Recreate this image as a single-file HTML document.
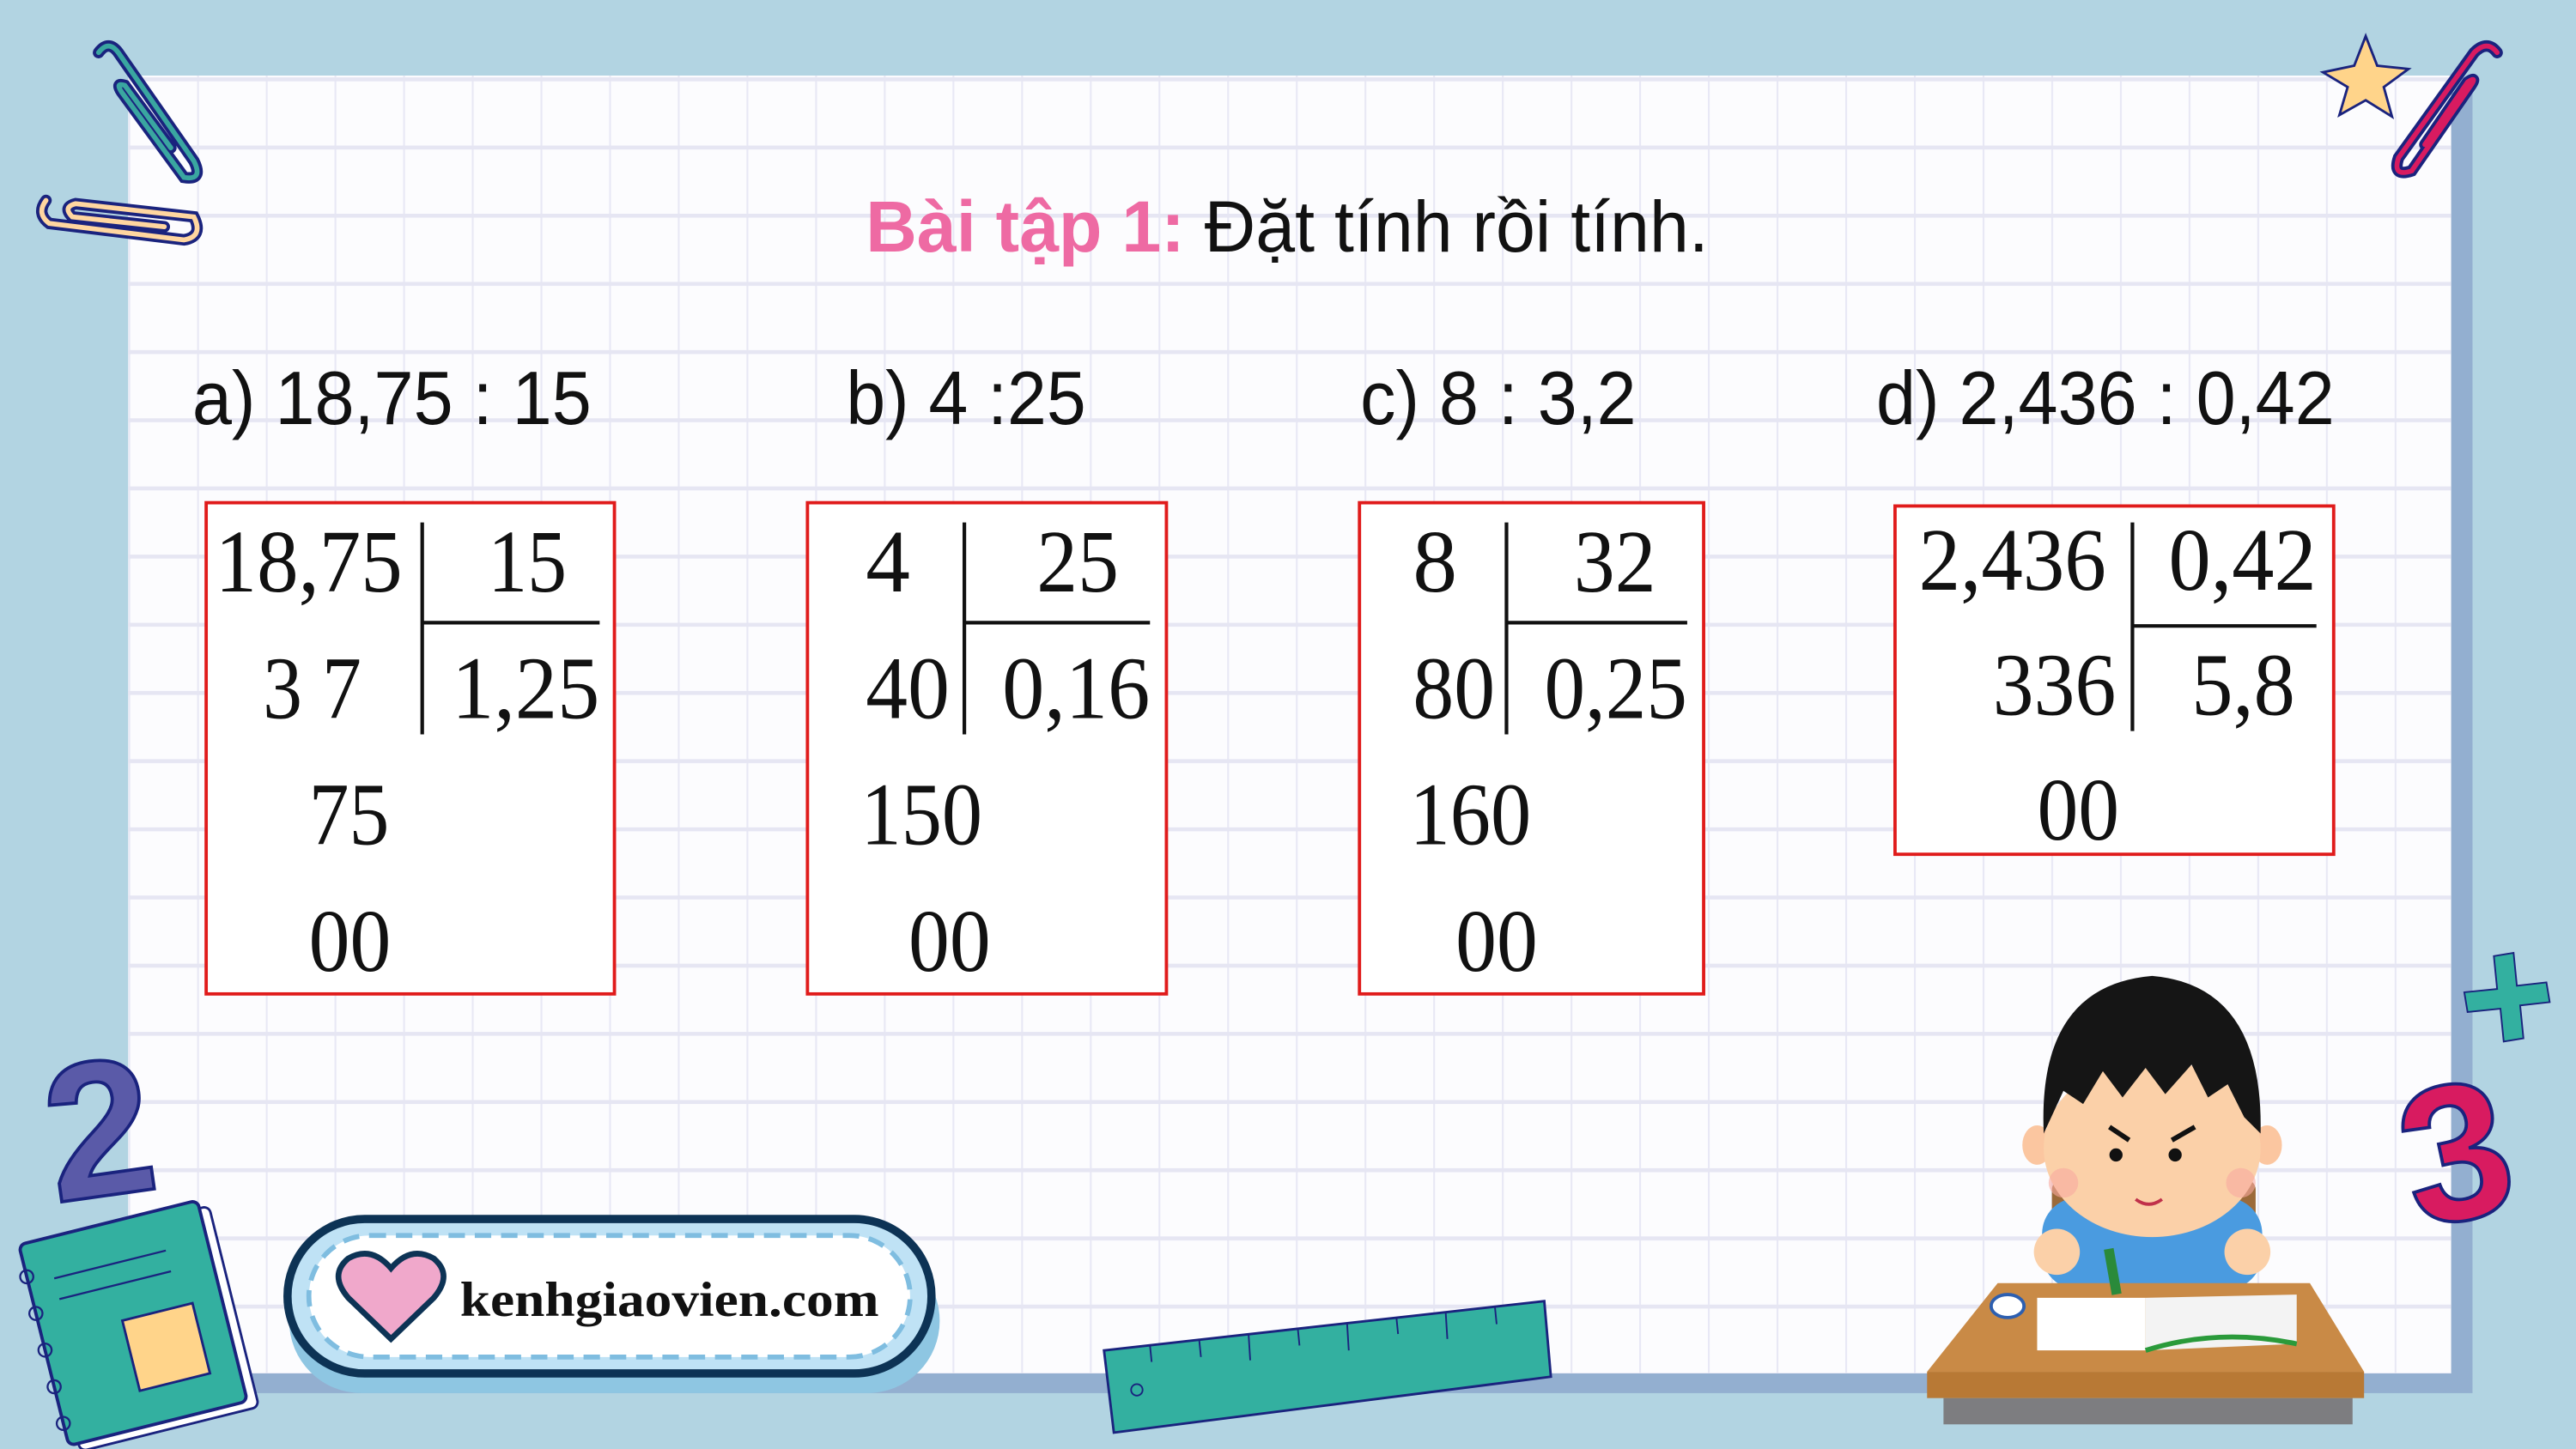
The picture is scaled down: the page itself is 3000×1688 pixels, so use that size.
<!DOCTYPE html>
<html><head><meta charset="utf-8"><style>html,body{margin:0;padding:0;width:3000px;height:1688px;overflow:hidden;background:#b2d4e2}svg{display:block}</style></head><body>
<svg width="3000" height="1688" viewBox="0 0 1568 882" preserveAspectRatio="none" xmlns="http://www.w3.org/2000/svg">
<defs>
<pattern id="g" x="120" y="88.6" width="41.8" height="41.5" patternUnits="userSpaceOnUse">
<rect x="0" y="0" width="1.1" height="41.5" fill="#e8e8f5"/>
<rect x="0" y="0" width="41.8" height="2.4" fill="#e6e6f3"/>
</pattern>
</defs>
<rect width="1568" height="882" fill="#b2d4e2"/>
<rect x="88" y="56" width="1417" height="792" fill="#93afd0"/>
<rect x="78" y="46" width="1414" height="790" fill="#fcfcfe"/>
<rect x="78" y="46" width="1414" height="790" fill="url(#g)"/>

<text x="527" y="153" font-family="Liberation Sans, sans-serif" font-size="44" textLength="513" lengthAdjust="spacingAndGlyphs"><tspan fill="#ee6aa3" font-weight="bold">Bài tập 1:</tspan><tspan fill="#111"> Đặt tính rồi tính.</tspan></text>

<g font-family="Liberation Sans, sans-serif" font-size="46" fill="#111">
<text x="117" y="258" textLength="243" lengthAdjust="spacingAndGlyphs">a) 18,75 : 15</text>
<text x="515" y="258" textLength="146" lengthAdjust="spacingAndGlyphs">b) 4 :25</text>
<text x="828" y="258" textLength="168" lengthAdjust="spacingAndGlyphs">c) 8 : 3,2</text>
<text x="1142" y="258" textLength="279" lengthAdjust="spacingAndGlyphs">d) 2,436 : 0,42</text>
</g>

<g fill="#fff" stroke="#e01b1b" stroke-width="2">
<rect x="125.5" y="306" width="248.5" height="299"/>
<rect x="491.5" y="306" width="218.5" height="299"/>
<rect x="827.5" y="306" width="209.5" height="299"/>
<rect x="1153.5" y="308" width="267" height="212"/>
</g>
<g stroke="#111" stroke-width="2.2">
<line x1="257" y1="318" x2="257" y2="447"/><line x1="257" y1="379" x2="365" y2="379"/>
<line x1="587" y1="318" x2="587" y2="447"/><line x1="587" y1="379" x2="700" y2="379"/>
<line x1="917" y1="318" x2="917" y2="447"/><line x1="917" y1="379" x2="1027" y2="379"/>
<line x1="1298" y1="318" x2="1298" y2="445"/><line x1="1298" y1="381" x2="1410" y2="381"/>
</g>
<g font-family="Liberation Serif, serif" font-size="54" fill="#111">
<text x="131" y="360" textLength="114" lengthAdjust="spacingAndGlyphs">18,75</text>
<text x="297" y="360" textLength="48" lengthAdjust="spacingAndGlyphs">15</text>
<text x="160" y="437" textLength="60" lengthAdjust="spacingAndGlyphs">3 7</text>
<text x="275" y="437" textLength="90" lengthAdjust="spacingAndGlyphs">1,25</text>
<text x="188" y="514" textLength="49" lengthAdjust="spacingAndGlyphs">75</text>
<text x="188" y="591" textLength="50" lengthAdjust="spacingAndGlyphs">00</text>

<text x="527" y="360">4</text>
<text x="631" y="360" textLength="50" lengthAdjust="spacingAndGlyphs">25</text>
<text x="527" y="437" textLength="51" lengthAdjust="spacingAndGlyphs">40</text>
<text x="610" y="437" textLength="90" lengthAdjust="spacingAndGlyphs">0,16</text>
<text x="524" y="514" textLength="74" lengthAdjust="spacingAndGlyphs">150</text>
<text x="553" y="591" textLength="50" lengthAdjust="spacingAndGlyphs">00</text>

<text x="860" y="360">8</text>
<text x="958" y="360" textLength="50" lengthAdjust="spacingAndGlyphs">32</text>
<text x="860" y="437" textLength="50" lengthAdjust="spacingAndGlyphs">80</text>
<text x="940" y="437" textLength="87" lengthAdjust="spacingAndGlyphs">0,25</text>
<text x="858" y="514" textLength="74" lengthAdjust="spacingAndGlyphs">160</text>
<text x="886" y="591" textLength="50" lengthAdjust="spacingAndGlyphs">00</text>

<text x="1168" y="359" textLength="114" lengthAdjust="spacingAndGlyphs">2,436</text>
<text x="1320" y="359" textLength="90" lengthAdjust="spacingAndGlyphs">0,42</text>
<text x="1213" y="435" textLength="75" lengthAdjust="spacingAndGlyphs">336</text>
<text x="1334" y="435" textLength="63" lengthAdjust="spacingAndGlyphs">5,8</text>
<text x="1240" y="511" textLength="50" lengthAdjust="spacingAndGlyphs">00</text>
</g>

<!-- paperclips -->
<g fill="none" stroke-linecap="round">
<path d="M60 32 Q66 24 72 32 L118 98 Q124 110 112 108 L74 56 Q70 50 76 52 L104 90" stroke="#1a237e" stroke-width="7"/>
<path d="M60 32 Q66 24 72 32 L118 98 Q124 110 112 108 L74 56 Q70 50 76 52 L104 90" stroke="#3aa6a0" stroke-width="3"/>
<path d="M28 122 Q22 130 30 136 L112 146 Q124 144 118 132 L46 124 Q38 126 44 132 L100 138" stroke="#1a237e" stroke-width="7"/>
<path d="M28 122 Q22 130 30 136 L112 146 Q124 144 118 132 L46 124 Q38 126 44 132 L100 138" stroke="#ffd6a0" stroke-width="3"/>
<path d="M1520 32 Q1514 24 1506 32 L1460 96 Q1456 108 1468 104 L1504 52 Q1508 46 1502 50 L1476 88" stroke="#1a237e" stroke-width="7"/>
<path d="M1520 32 Q1514 24 1506 32 L1460 96 Q1456 108 1468 104 L1504 52 Q1508 46 1502 50 L1476 88" stroke="#d81b60" stroke-width="3"/>
</g>
<polygon points="1440,22 1447,40 1466,42 1451,53 1456,71 1440,61 1424,70 1429,53 1414,44 1433,40" fill="#ffd48a" stroke="#1a237e" stroke-width="1.5"/>

<!-- numbers -->
<text x="28" y="728" font-family="Liberation Sans, sans-serif" font-weight="bold" font-size="118" fill="#5a5aa8" stroke="#1a237e" stroke-width="2" transform="rotate(-8 60 690)">2</text>
<text x="1462" y="740" font-family="Liberation Sans, sans-serif" font-weight="bold" font-size="118" fill="#d81b60" stroke="#1a237e" stroke-width="2" transform="rotate(-12 1505 700)">3</text>
<path d="M1518 582 L1530 580 L1532 600 L1550 598 L1552 610 L1534 612 L1536 632 L1524 634 L1522 614 L1502 616 L1500 604 L1520 602 Z" fill="#33b0a0" stroke="#1a237e" stroke-width="1"/>

<!-- notebook -->
<g transform="rotate(-14 90 800)">
<rect x="30" y="745" width="112" height="126" rx="4" fill="#fff" stroke="#1a237e" stroke-width="1.5"/>
<rect x="24" y="740" width="112" height="126" rx="4" fill="#33b0a0" stroke="#1a237e" stroke-width="2"/>
<rect x="74" y="800" width="44" height="44" fill="#ffd48a" stroke="#1a237e" stroke-width="1.5"/>
<line x1="40" y1="765" x2="110" y2="765" stroke="#1a237e" stroke-width="1.2"/>
<line x1="40" y1="778" x2="110" y2="778" stroke="#1a237e" stroke-width="1.2"/>
<g fill="none" stroke="#1a237e" stroke-width="1.2"><circle cx="24" cy="760" r="4"/><circle cx="24" cy="783" r="4"/><circle cx="24" cy="806" r="4"/><circle cx="24" cy="829" r="4"/><circle cx="24" cy="852" r="4"/></g>
</g>

<!-- badge -->
<rect x="176" y="760" width="396" height="88" rx="44" fill="#8ec6e2"/>
<rect x="175" y="742" width="392" height="94" rx="47" fill="#bfe2f5" stroke="#0d3355" stroke-width="5"/>
<rect x="188" y="752" width="366" height="74" rx="37" fill="#fff" stroke="#7fbde0" stroke-width="3" stroke-dasharray="10 6"/>
<path d="M238 815 L212 790 Q200 776 212 766 Q226 758 238 772 Q250 758 264 766 Q276 776 264 790 Z" fill="#f0a8cb" stroke="#0d3355" stroke-width="3.5"/>
<text x="280" y="801" font-family="Liberation Serif, serif" font-weight="bold" font-size="30" fill="#111" textLength="255" lengthAdjust="spacingAndGlyphs">kenhgiaovien.com</text>

<!-- ruler -->
<polygon points="672,822 940,792 944,838 678,872" fill="#33b0a0" stroke="#1a237e" stroke-width="1.5"/>
<g stroke="#1a237e" stroke-width="1">
<line x1="700" y1="819" x2="701" y2="829"/><line x1="730" y1="816" x2="731" y2="826"/><line x1="760" y1="812" x2="761" y2="828"/><line x1="790" y1="809" x2="791" y2="819"/><line x1="820" y1="806" x2="821" y2="822"/><line x1="850" y1="802" x2="851" y2="812"/><line x1="880" y1="799" x2="881" y2="815"/><line x1="910" y1="796" x2="911" y2="806"/>
</g>
<circle cx="692" cy="846" r="3.5" fill="none" stroke="#1a237e" stroke-width="1"/>

<!-- boy -->
<rect x="1249" y="718" width="124" height="50" rx="6" fill="#9b6a3a"/>
<rect x="1243" y="729" width="134" height="56" rx="22" fill="#4a9be0"/>
<ellipse cx="1252" cy="762" rx="14" ry="14" fill="#fbd0a8"/>
<ellipse cx="1368" cy="762" rx="14" ry="14" fill="#fbd0a8"/>
<rect x="1183" y="851" width="249" height="16" fill="#7d7d80"/>
<polygon points="1216,781 1406,781 1439,835 1173,835" fill="#c98a46"/>
<rect x="1173" y="835" width="266" height="16" fill="#b87935"/>
<polygon points="1240,790 1306,790 1306,822 1240,822" fill="#fff"/>
<polygon points="1306,790 1398,788 1398,818 1306,822" fill="#f3f3f3"/>
<path d="M1306 822 Q1350 808 1398 818" fill="none" stroke="#2a9a3a" stroke-width="3"/>
<ellipse cx="1222" cy="795" rx="10" ry="7" fill="#fff" stroke="#2d5fb0" stroke-width="2"/>
<rect x="1283" y="760" width="6" height="28" fill="#2a8a3a" transform="rotate(-10 1286 774)"/>
<ellipse cx="1240" cy="697" rx="9" ry="12" fill="#fbc6a0"/>
<ellipse cx="1380" cy="697" rx="9" ry="12" fill="#fbc6a0"/>
<ellipse cx="1310" cy="699" rx="66" ry="54" fill="#fbd0a8"/>
<path d="M1244 690 Q1240 600 1310 594 Q1378 600 1376 690 L1366 680 L1356 660 L1344 668 L1334 648 L1318 666 L1306 650 L1292 668 L1280 652 L1268 672 L1256 664 Z" fill="#151515"/>
<circle cx="1288" cy="703" r="4" fill="#111"/><circle cx="1324" cy="703" r="4" fill="#111"/>
<path d="M1284 686 L1296 694 M1336 686 L1322 694" stroke="#111" stroke-width="3"/>
<path d="M1300 730 Q1308 736 1316 730" fill="none" stroke="#c0304a" stroke-width="2"/>
<circle cx="1256" cy="720" r="9" fill="#f8aaa0" opacity="0.6"/><circle cx="1364" cy="720" r="9" fill="#f8aaa0" opacity="0.6"/>
</svg>
</body></html>
